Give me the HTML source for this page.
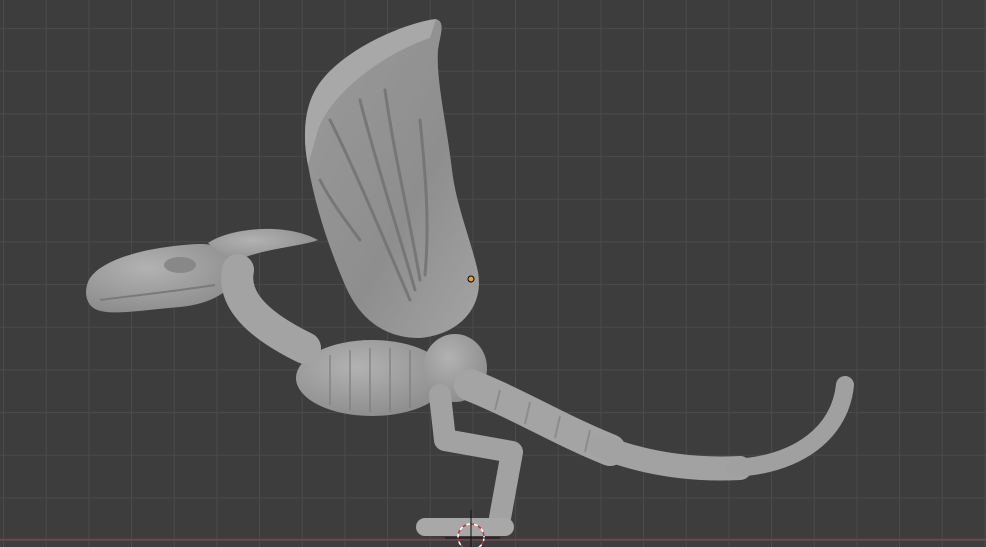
<!DOCTYPE html>
<html><head><meta charset="utf-8"><style>
html,body{margin:0;padding:0;background:#3d3d3d;overflow:hidden}
svg{display:block}
</style></head><body>
<svg width="986" height="547" viewBox="0 0 986 547" xmlns="http://www.w3.org/2000/svg">
<defs>
<pattern id="g" x="3" y="28" width="42.67" height="42.67" patternUnits="userSpaceOnUse">
<path d="M0 0H42.67M0 0V42.67" stroke="#4a4a4a" stroke-width="2" fill="none"/>
</pattern>
<radialGradient id="b" cx="40%" cy="35%" r="70%">
<stop offset="0" stop-color="#b2b2b2"/><stop offset="1" stop-color="#8c8c8c"/>
</radialGradient>
<linearGradient id="w" x1="0" y1="0" x2="1" y2="1">
<stop offset="0" stop-color="#9a9a9a"/><stop offset="0.6" stop-color="#8e8e8e"/><stop offset="1" stop-color="#a4a4a4"/>
</linearGradient>
</defs>
<rect width="986" height="547" fill="#3d3d3d"/>
<rect width="986" height="547" fill="url(#g)"/>
<line x1="0" y1="539.5" x2="986" y2="539.5" stroke="#8a3a42" stroke-width="1.5"/>
<!-- wing -->
<path d="M436,19 C410,22 350,45 322,80 C304,102 302,135 308,165 C316,210 330,250 345,285 C360,320 385,338 420,338 C462,334 484,305 478,272 C471,240 456,205 452,170 C446,120 436,80 438,50 C440,35 446,22 436,19 Z" fill="url(#w)"/>
<path d="M436,19 C410,22 350,45 322,80 C304,102 302,135 308,165 L318,130 C330,95 380,55 430,38 Z" fill="#a8a8a8"/>
<g stroke="#6e6e6e" stroke-width="3" fill="none" stroke-linecap="round" opacity="0.75">
<path d="M410,300 C380,230 355,170 330,120"/>
<path d="M415,290 C395,220 375,160 360,100"/>
<path d="M420,280 C410,220 395,160 385,90"/>
<path d="M425,275 C430,220 425,170 420,120"/>
<path d="M360,240 C345,220 330,200 320,180"/>
</g>
<g fill="url(#b)">
<!-- head -->
<path d="M88,282 C96,262 140,247 198,244 C224,243 240,256 238,272 C233,292 210,304 180,307 C140,310 102,318 91,306 C85,299 85,290 88,282 Z"/>
<!-- horn -->
<path d="M208,243 C230,228 285,222 318,240 C300,247 262,248 234,262 Z"/>
<!-- ribcage -->
<ellipse cx="372" cy="378" rx="76" ry="38"/>
<!-- hip -->
<ellipse cx="455" cy="368" rx="32" ry="34"/>
</g>
<path d="M100,300 C130,296 170,292 215,285" stroke="#7a7a7a" stroke-width="2" fill="none"/>
<ellipse cx="180" cy="265" rx="16" ry="8" fill="#888"/>
<g fill="none" stroke-linecap="round" stroke-linejoin="round">
<!-- neck -->
<path d="M238,270 C232,300 258,325 305,348" stroke="#a3a3a3" stroke-width="32"/>
<!-- tail -->
<path d="M470,385 C520,405 560,430 610,450" stroke="#a4a4a4" stroke-width="32"/>
<path d="M600,446 C650,466 700,470 740,468" stroke="#a2a2a2" stroke-width="24"/>
<path d="M735,468 C800,464 840,432 845,385" stroke="#a0a0a0" stroke-width="18"/>
<!-- leg -->
<path d="M440,395 L445,440 L512,452 L500,518" stroke="#a2a2a2" stroke-width="22"/>
<path d="M425,527 L505,527" stroke="#a8a8a8" stroke-width="18"/>
</g>
<g stroke="#7d7d7d" stroke-width="2" opacity="0.6">
<line x1="330" y1="355" x2="330" y2="405"/><line x1="350" y1="350" x2="350" y2="410"/>
<line x1="370" y1="348" x2="370" y2="412"/><line x1="390" y1="348" x2="390" y2="412"/>
<line x1="410" y1="350" x2="410" y2="408"/>
<line x1="500" y1="390" x2="495" y2="410"/><line x1="530" y1="402" x2="525" y2="424"/>
<line x1="560" y1="416" x2="555" y2="438"/><line x1="590" y1="430" x2="585" y2="452"/>
</g>
<circle cx="471" cy="279" r="3" fill="#f0a020" stroke="#000" stroke-width="1"/>
<circle cx="471" cy="537" r="13" fill="none" stroke="#ffffff" stroke-width="1.5" stroke-dasharray="4 4"/>
<circle cx="471" cy="537" r="13" fill="none" stroke="#d03030" stroke-width="1.5" stroke-dasharray="4 4" stroke-dashoffset="4"/>
<line x1="471" y1="510" x2="471" y2="547" stroke="#111" stroke-width="1"/>
<line x1="445" y1="538" x2="500" y2="538" stroke="#111" stroke-width="1"/>
</svg>
</body></html>
